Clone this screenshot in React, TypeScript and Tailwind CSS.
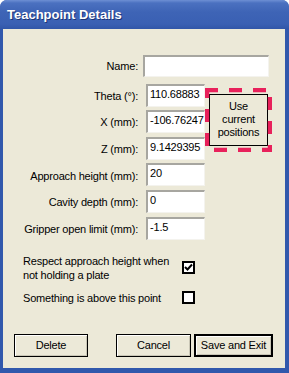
import React from "react";

const font = "font-['Liberation_Sans',Arial,sans-serif]";

function Field({ value, wide }: { value: string; wide?: boolean }) {
  return (
    <div
      className={`${wide ? "w-[126px] h-[22px]" : "ml-[3px] w-[59px] h-[23px]"} bg-white border-t-2 border-l-2 border-r border-b border-t-[#a7a6a0] border-l-[#a7a6a0] border-r-[#f4f3ee] border-b-[#f4f3ee] overflow-hidden whitespace-nowrap pl-[2px] pt-[1px] text-[11px] leading-[14px] text-black`}
    >
      {value}
    </div>
  );
}

function Label({ text }: { text: string }) {
  return (
    <div className="col-start-1 h-[23px] flex items-center justify-end pr-[5px] pt-[2px] text-[11px] text-black whitespace-nowrap">
      {text}
    </div>
  );
}

function Checkbox({ checked }: { checked?: boolean }) {
  return (
    <div className="w-[13px] h-[13px] border-2 border-black bg-white flex items-center justify-center shrink-0">
      {checked && (
        <svg width="9" height="9" viewBox="0 0 9 9">
          <path d="M1 4 L3.5 6.5 L8 1.5" stroke="black" strokeWidth="2" fill="none" />
        </svg>
      )}
    </div>
  );
}

function Button({ label, primary, className = "" }: { label: string; primary?: boolean; className?: string }) {
  return (
    <button
      className={`h-[23px] ${primary ? "border-2" : "border"} border-black bg-[#ece9d8] shadow-[inset_1px_1px_0_#ffffff,inset_-1px_-1px_0_#c9c6b6] text-[11px] text-black ${className}`}
    >
      {label}
    </button>
  );
}

export default function App() {
  const rows: [string, string][] = [
    ["Theta (°):", "110.68883"],
    ["X (mm):", "-106.76247"],
    ["Z (mm):", "9.1429395"],
    ["Approach height (mm):", "20"],
    ["Cavity depth (mm):", "0"],
    ["Gripper open limit (mm):", "-1.5"],
  ];

  return (
    <div className="bg-white w-[289px] h-[373px]">
      <div className={`${font} w-[289px] h-[373px] flex flex-col rounded-t-[7px] bg-[#3158ac] overflow-hidden`}>
        {/* Title bar */}
        <div className="h-[29px] shrink-0 bg-[linear-gradient(#6d8fd4_0px,#4b71c0_3px,#3e64b6_12px,#3a60b3_24px,#3156a8_29px)] flex items-center pl-[7px]">
          <span className="text-white font-bold text-[13px] [text-shadow:1px_1px_0_#1d3576]">
            Teachpoint Details
          </span>
        </div>

        {/* Body */}
        <div className="flex-1 ml-[3px] mr-[4px] mb-[5px] bg-[#ece9d8] flex flex-col pt-[26px] tracking-[-0.2px]">
          <div className="grid grid-cols-[140px_66px_1fr] gap-y-[3.6px] items-start">
            <div className="col-start-1 h-[25px] flex items-start">
              <div className="w-full h-[22px] flex items-center justify-end pr-[5px] text-[11px] text-black">
                Name:
              </div>
            </div>
            <div className="col-span-2 h-[25px]">
              <Field value="" wide />
            </div>

            {rows.map(([label, value], i) => (
              <React.Fragment key={label}>
                <Label text={label} />
                <div className="col-start-2">
                  <Field value={value} />
                </div>
                {i === 0 && (
                  <div className="col-start-3 row-span-3 relative mt-[10px] w-[59px] h-[52px]">
                    <button className="w-[59px] h-[52px] border border-black bg-[#ece9d8] text-[11px] leading-[13px] text-black text-center">
                      Use
                      <br />
                      current
                      <br />
                      positions
                    </button>
                    <svg
                      className="absolute left-[-4px] top-[-6px]"
                      width="67"
                      height="64"
                      viewBox="0 0 67 64"
                    >
                      <rect
                        x="2"
                        y="2"
                        width="63"
                        height="60"
                        fill="none"
                        stroke="#e8215b"
                        strokeWidth="4.5"
                        strokeDasharray="13 11"
                        strokeDashoffset="2"
                      />
                    </svg>
                  </div>
                )}
              </React.Fragment>
            ))}
          </div>

          {/* Options */}
          <div className="mt-[14px] ml-[20px] flex flex-col gap-[9px] text-[11px] leading-[14px] text-black">
            <div className="flex items-center">
              <div className="w-[159px]">
                Respect approach height when
                <br />
                not holding a plate
              </div>
              <Checkbox checked />
            </div>
            <div className="flex items-center">
              <div className="w-[159px]">Something is above this point</div>
              <Checkbox />
            </div>
          </div>

          {/* Buttons */}
          <div className="mt-auto mb-[11px] flex items-center">
            <Button label="Delete" className="ml-[11px] w-[74px]" />
            <Button label="Cancel" className="ml-[28px] w-[75px]" />
            <Button label="Save and Exit" primary className="ml-[3px] w-[79px]" />
          </div>
        </div>
      </div>
    </div>
  );
}
